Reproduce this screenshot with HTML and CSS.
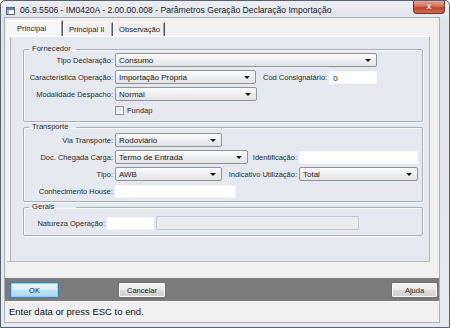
FILE: index.html
```html
<!DOCTYPE html>
<html lang="pt">
<head>
    <meta charset="UTF-8">
    <meta name="viewport" content="width=device-width, initial-scale=1.0">
    <title>Parâmetros Geração Declaração Importação</title>
    <link rel="stylesheet" href="styles.css">
</head>
<body>

    <div class="window">

        <!-- Title bar -->
        <div class="titlebar">
            <svg class="app-icon" width="9" height="8" viewBox="0 0 9 8">
                <rect x="0.5" y="0.5" width="8" height="7" fill="#f4f6f8" stroke="#5b6570"/>
                <rect x="1" y="1" width="7" height="2" fill="#5a86bd"/>
                <rect x="1" y="3" width="2" height="4" fill="#9bb6d8"/>
            </svg>
            <span class="title">06.9.5506 - IM0420A - 2.00.00.008 - Parâmetros Geração Declaração Importação</span>
            <div class="close">x</div>
        </div>

        <div class="client">

            <div class="tabs">
                <div class="tab tab-principal active">Principal</div>
                <div class="tab tab-principal2">Principal II</div>
                <div class="tab tab-obs">Observação</div>
            </div>

            <div class="panel">

                <fieldset class="group">
                    <legend>Fornecedor</legend>
                    <div class="rows">
                        <div class="row">
                            <span class="lbl">Tipo Declaração:</span>
                            <div class="combo w-262">Consumo</div>
                        </div>
                        <div class="row">
                            <span class="lbl">Característica Operação:</span>
                            <div class="combo w-141">Importação Própria</div>
                            <span class="lbl-inline cod">Cod Consignatário:</span>
                            <div class="field w-48">0</div>
                        </div>
                        <div class="row">
                            <span class="lbl">Modalidade Despacho:</span>
                            <div class="combo w-142">Normal</div>
                        </div>
                        <div class="row row-check">
                            <span class="lbl"></span>
                            <span class="check"></span>
                            <span class="lbl-text">Fundap</span>
                        </div>
                    </div>
                </fieldset>

                <fieldset class="group group-transporte">
                    <legend>Transporte</legend>
                    <div class="rows">
                        <div class="row">
                            <span class="lbl">Via Transporte:</span>
                            <div class="combo w-107">Rodoviário</div>
                        </div>
                        <div class="row">
                            <span class="lbl">Doc. Chegada Carga:</span>
                            <div class="combo w-133">Termo de Entrada</div>
                            <span class="lbl-inline w-49">Identificação:</span>
                            <div class="field w-119"></div>
                        </div>
                        <div class="row">
                            <span class="lbl">Tipo:</span>
                            <div class="combo w-107">AWB</div>
                            <span class="lbl-inline w-75">Indicativo Utilização:</span>
                            <div class="combo w-119">Total</div>
                        </div>
                        <div class="row">
                            <span class="lbl">Conhecimento House:</span>
                            <div class="field w-121"></div>
                        </div>
                    </div>
                </fieldset>

                <fieldset class="group group-gerais">
                    <legend>Gerais</legend>
                    <div class="rows">
                        <div class="row">
                            <span class="lbl lbl-short">Natureza Operação:</span>
                            <div class="field w-47"></div>
                            <div class="field disabled w-203"></div>
                        </div>
                    </div>
                </fieldset>

            </div>

            <!-- Button bar -->
            <div class="button-bar">
                <button class="btn btn-ok">OK</button>
                <button class="btn btn-cancel">Cancelar</button>
                <button class="btn btn-help">Ajuda</button>
            </div>

            <div class="status">Enter data or press ESC to end.</div>
        </div>
    </div>

</body>
</html>
```

FILE: styles.css
```css
/* Base */
* {
    box-sizing: border-box;
}

body {
    margin: 0;
    width: 450px;
    height: 328px;
    overflow: hidden;
    background: #ffffff;
    font-family: "Liberation Sans", Arial, sans-serif;
    font-size: 8px;
    color: #1e1e1e;
}

/* Window frame */
.window {
    width: 450px;
    height: 328px;
    display: flex;
    flex-direction: column;
    padding: 0 9px 4px 3px;
    border: 1px solid #59626c;
    border-radius: 5px 5px 0 0;
    background: linear-gradient(#eaedf1, #e0e4e9 20px, #e6e9ed);
}

.titlebar {
    height: 17px;
    display: flex;
    align-items: flex-start;
    margin-right: -9px;
}

.app-icon {
    margin: 6px 0 0 2px;
}

.title {
    margin: 3px 0 0 5px;
    font-size: 8.6px;
    line-height: 12px;
    color: #1a1a1a;
    white-space: nowrap;
}

.close {
    margin-left: auto;
    margin-right: 4px;
    width: 32px;
    height: 13px;
    border: 1px solid #74302a;
    border-top: none;
    border-radius: 0 0 4px 4px;
    background: linear-gradient(#e8a596, #d2705c 45%, #c2432e 55%, #cf6a53);
    color: #ffffff;
    font-weight: bold;
    font-size: 9px;
    line-height: 11px;
    text-align: center;
    text-shadow: 0 0 2px #5a1a12;
}

/* Client area */
.client {
    flex: 1;
    display: flex;
    flex-direction: column;
    background: #f0f0f0;
    border: 1px solid #a6aeb8;
}

.tabs {
    height: 18px;
    display: flex;
    align-items: flex-end;
    padding: 2px 0 0 2px;
}

.tab {
    height: 14px;
    padding-left: 5px;
    font-size: 7.6px;
    line-height: 14px;
    white-space: nowrap;
    background: #f0f0f0;
    border-top: 1px solid #ffffff;
    border-left: 1px solid #ffffff;
    border-right: 1px solid #555555;
    box-shadow: inset -1px 0 #a0a0a0;
}

.tab.active {
    height: 16px;
    line-height: 16px;
    padding-left: 9px;
    background: #f6f7f9;
}

.tab-principal { width: 56px; }
.tab-principal2 { width: 50px; }
.tab-obs { width: 52px; }

.panel {
    height: 226px;
    width: 423px;
    margin-left: 2px;
    padding: 8px 0 0 16px;
    background: #e5e8ee;
    border-top: 1px solid #ffffff;
    border-right: 1px solid #b4b9c1;
    border-bottom: 1px solid #b4b9c1;
    box-shadow: inset 3px 0 0 #f4f5f7, inset 4px 0 0 #aab0b8;
}

/* Group boxes */
.group {
    width: 400px;
    margin: 0;
    padding: 0 0 5px 0;
    min-inline-size: 0;
    border: 1px solid #a9afb8;
    border-radius: 2px;
    box-shadow: inset 1px 1px #f7f8fa, 1px 1px #f7f8fa;
}

.group legend {
    width: 47px;
    height: 8px;
    margin-left: 5px;
    padding: 0 0 0 3px;
    font-size: 7.6px;
    line-height: 8px;
    color: #2a2a2a;
}

.group-transporte {
    margin-top: 1px;
    padding: 2px 0 3px 0;
}

.group-gerais {
    margin-top: 1px;
    padding: 5px 0 5px 0;
}

.rows {
    display: flex;
    flex-direction: column;
    gap: 3px;
}

.row {
    height: 14px;
    display: flex;
    align-items: center;
}

.row-check {
    height: 12px;
}

.lbl,
.lbl-inline,
.lbl-text {
    font-size: 7.5px;
    white-space: nowrap;
    color: #2a2a2a;
}

.lbl {
    width: 89px;
    margin-right: 2px;
    text-align: right;
}

.lbl-short {
    width: 81px;
}

.lbl-inline {
    margin-right: 2px;
    text-align: right;
}

.lbl-inline.cod {
    margin-left: 7px;
}

/* Combos and fields */
.combo {
    height: 14px;
    display: flex;
    align-items: center;
    justify-content: space-between;
    padding: 0 5px 0 3px;
    border: 1px solid #8e949c;
    border-radius: 2px;
    background: linear-gradient(#fcfcfc, #eeeff0 50%, #e2e3e5);
    color: #151515;
    white-space: nowrap;
}

.combo::after {
    content: "";
    border-left: 3px solid transparent;
    border-right: 3px solid transparent;
    border-top: 3px solid #111111;
}

.field {
    height: 13px;
    padding: 0 3px;
    line-height: 13px;
    background: #ffffff;
    border: 1px solid #f6f6f6;
    color: #151515;
}

.field.disabled {
    height: 14px;
    margin-left: 2px;
    background: #e9ebef;
    border: 1px solid #c3c8cf;
    border-radius: 2px;
}

.check {
    width: 9px;
    height: 9px;
    margin-right: 3px;
    border: 1px solid #8f9296;
    background: linear-gradient(135deg, #d9dadc, #ffffff);
}

.w-262 { width: 262px; }
.w-141 { width: 141px; }
.w-142 { width: 142px; }
.w-133 { width: 133px; }
.w-121 { width: 121px; }
.w-119 { width: 119px; }
.w-107 { width: 107px; }
.w-75 { width: 75px; }
.w-49 { width: 49px; }
.w-48 { width: 48px; }
.w-47 { width: 47px; }
.w-203 { width: 203px; }

/* Button bar */
.button-bar {
    height: 23px;
    margin-top: 16px;
    display: flex;
    align-items: flex-start;
    padding: 4px 1px 0 5px;
    background: #7b7b7b;
}

.btn {
    height: 16px;
    padding: 0;
    font-family: "Liberation Sans", Arial, sans-serif;
    font-size: 7.5px;
    color: #1e1e1e;
    border: 1px solid #6f6f6f;
    border-radius: 2px;
    background: linear-gradient(#f6f6f6, #e9e9e9 50%, #dadada 51%, #d0d0d0);
    box-shadow: inset 0 0 0 1px #fafafa;
}

.btn-ok {
    width: 49px;
    border-color: #3f7fb5;
    background: linear-gradient(#eef7fd, #d9eefb 50%, #bfe2f7 51%, #a9d6f2);
    box-shadow: inset 0 0 0 1px #8fd1f5;
}

.btn-cancel {
    width: 48px;
    margin-left: 59px;
}

.btn-help {
    width: 47px;
    margin-left: auto;
}

/* Status bar */
.status {
    flex: 1;
    padding-left: 4px;
    font-size: 9.5px;
    line-height: 20px;
    color: #111111;
    background: #f0f0f0;
    border-top: 1px solid #fbfbfb;
}
```
